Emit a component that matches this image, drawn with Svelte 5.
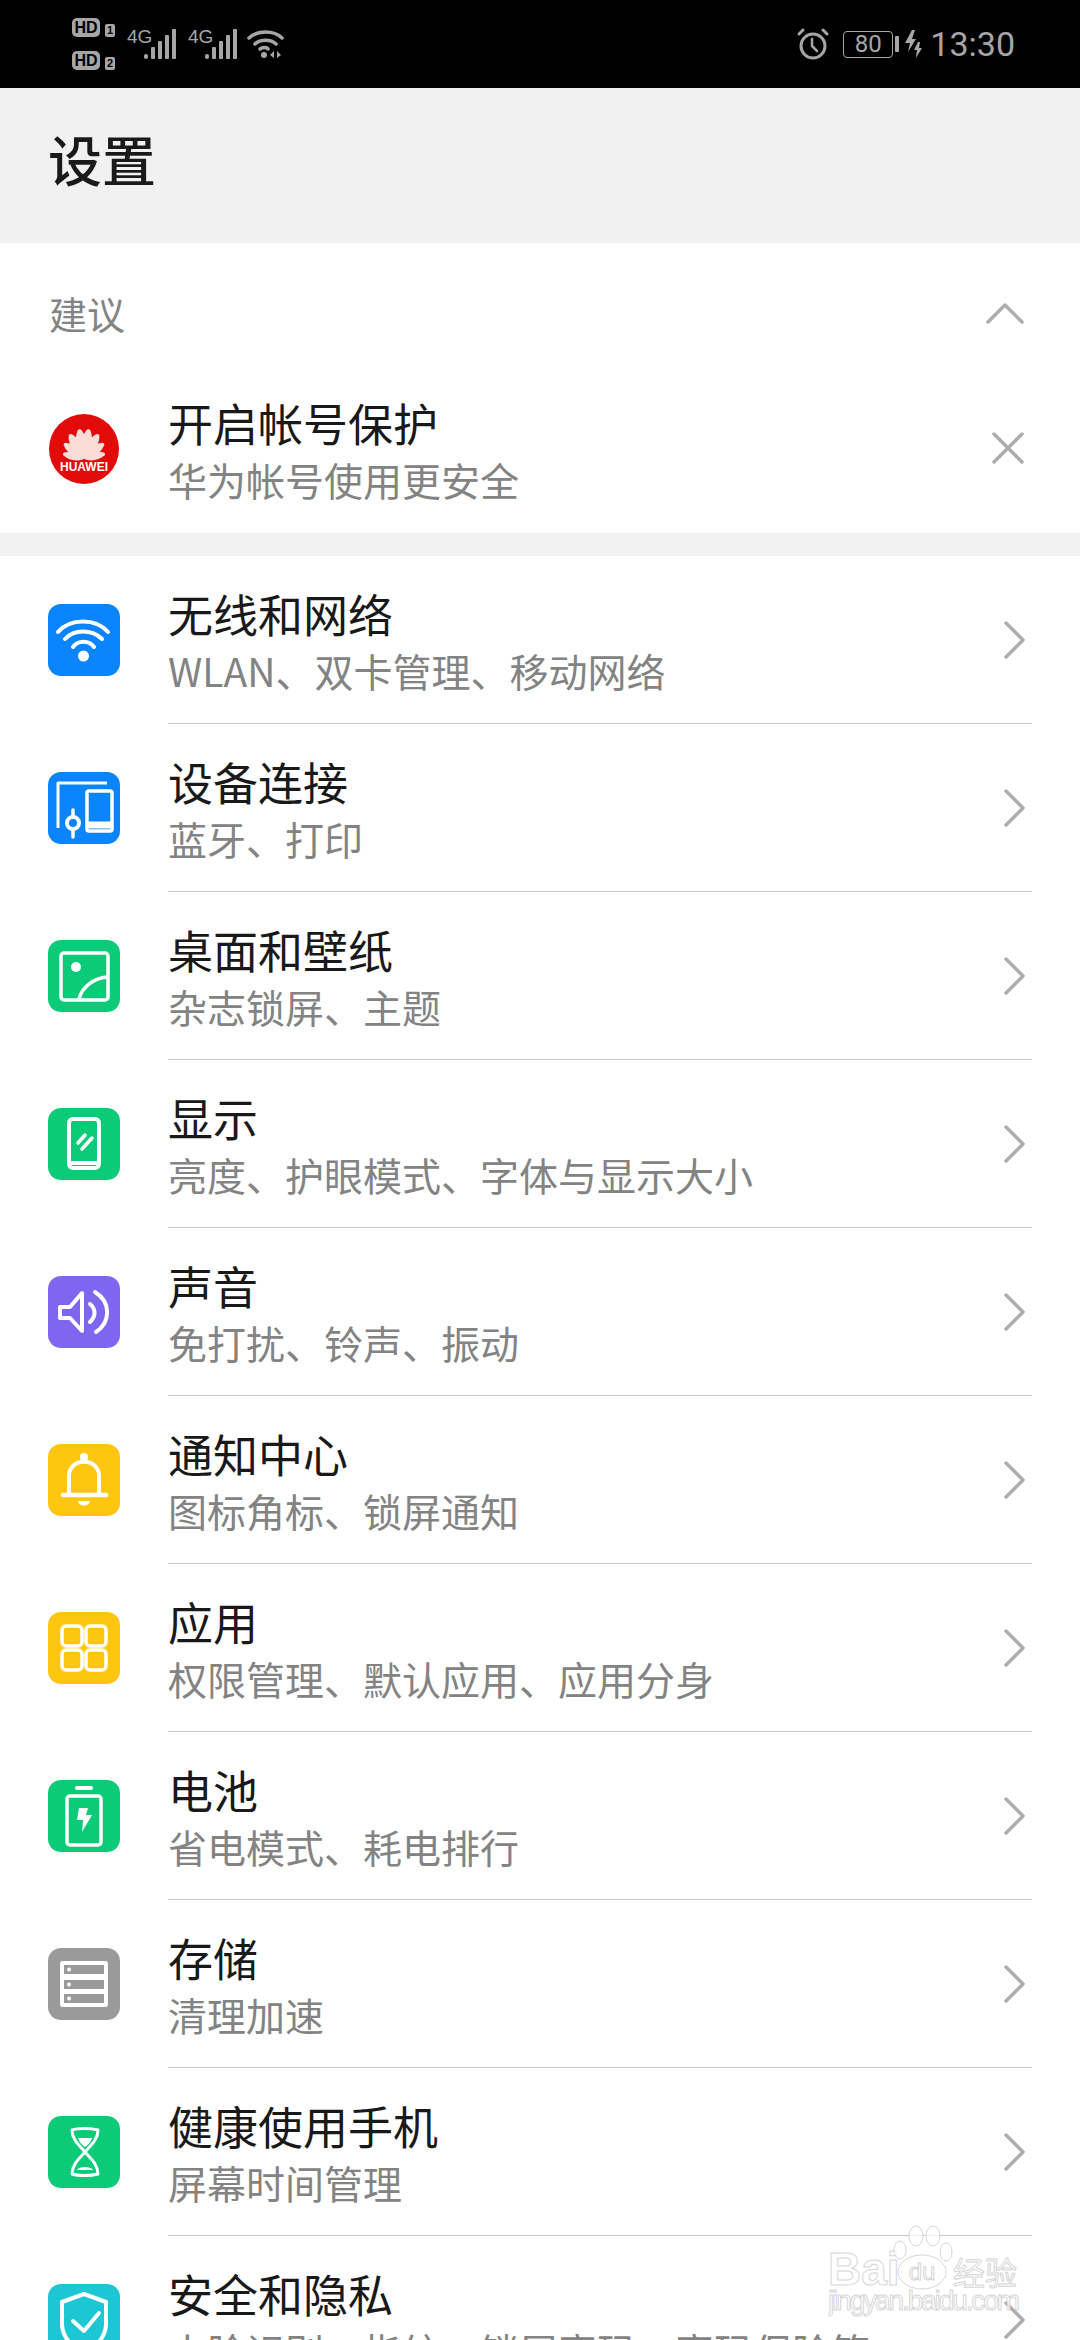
<script>
  const rows = [
    { icon: 'wifi', color: '#0a84ff', title: '无线和网络', sub: 'WLAN、双卡管理、移动网络' },
    { icon: 'devices', color: '#0a84ff', title: '设备连接', sub: '蓝牙、打印' },
    { icon: 'wallpaper', color: '#0ccb78', title: '桌面和壁纸', sub: '杂志锁屏、主题' },
    { icon: 'display', color: '#0ccb78', title: '显示', sub: '亮度、护眼模式、字体与显示大小' },
    { icon: 'sound', color: '#7f66f0', title: '声音', sub: '免打扰、铃声、振动' },
    { icon: 'bell', color: '#ffc60f', title: '通知中心', sub: '图标角标、锁屏通知' },
    { icon: 'apps', color: '#ffc60f', title: '应用', sub: '权限管理、默认应用、应用分身' },
    { icon: 'battery', color: '#0ccb78', title: '电池', sub: '省电模式、耗电排行' },
    { icon: 'storage', color: '#9a9a9a', title: '存储', sub: '清理加速' },
    { icon: 'hourglass', color: '#0ccb78', title: '健康使用手机', sub: '屏幕时间管理' },
    { icon: 'shield', color: '#1cc6d2', title: '安全和隐私', sub: '人脸识别、指纹、锁屏密码、密码保险箱' }
  ];

  // logo fan: angle from vertical, and how long the petal is
  const petals = [
    { a: -76, s: 0.72 },
    { a: -52, s: 0.84 },
    { a: -30, s: 0.95 },
    { a: -9, s: 1 },
    { a: 9, s: 1 },
    { a: 30, s: 0.95 },
    { a: 52, s: 0.84 },
    { a: 76, s: 0.72 }
  ];
</script>

<div class="phone">
  <div class="status">
    <div class="status-left">
      <div class="hd-stack">
        <div class="hd-line"><span class="hd">HD</span><span class="sim">1</span></div>
        <div class="hd-line"><span class="hd">HD</span><span class="sim">2</span></div>
      </div>
      {#each [1, 2] as sim (sim)}
        <div class="signal">
          <span class="net">4G</span>
          <svg width="32" height="30" viewBox="0 0 32 30" fill="#a6a6a6">
            <rect x="0" y="25" width="4" height="5" rx="2" />
            <rect x="7" y="18" width="4" height="12" rx="1" />
            <rect x="14" y="12" width="4" height="18" rx="1" />
            <rect x="21" y="6" width="4" height="24" rx="1" />
            <rect x="28" y="0" width="4" height="30" rx="1" />
          </svg>
        </div>
      {/each}
      <svg class="status-wifi" width="37" height="30" viewBox="0 0 37 30" fill="none" stroke="#a6a6a6" stroke-width="3.5" stroke-linecap="round">
        <path d="M2 9 C10 1 27 1 35 9" />
        <path d="M8 15 C13 10 24 10 29 15" />
        <path d="M13 20 C15 18 20 18 21 20" />
        <circle cx="17" cy="26" r="3" fill="#a6a6a6" stroke="none" />
        <path d="M27 22 L23 26 L27 29 Z M30 22 L34 26 L30 29 Z" fill="#a6a6a6" stroke="none" />
      </svg>
    </div>
    <div class="status-right">
      <svg width="32" height="32" viewBox="0 0 32 32" fill="none" stroke="#a6a6a6" stroke-width="3" stroke-linecap="round">
        <circle cx="16" cy="18" r="12" />
        <path d="M15 11 V18 L20 23" stroke-width="2.5" />
        <path d="M2 6 L6 2 M30 6 L26 2" />
      </svg>
      <div class="battery"><span>80</span></div>
      <span class="nub"></span>
      <svg class="charge" width="17" height="28" viewBox="0 0 17 28" fill="#a6a6a6">
        <path d="M7 0 L0 13 H5 L3 22 L11 9 H7 L10 0 Z" />
        <path d="M13 12 L9 20 H12 L11 28 L17 18 H14 L15 12 Z" />
      </svg>
      <span class="time">13:30</span>
    </div>
  </div>

  <header class="title-bar"><h1>设置</h1></header>

  <section class="suggest">
    <div class="suggest-head">
      <span>建议</span>
      <svg width="38" height="22" viewBox="0 0 38 22" fill="none" stroke="#adadad" stroke-width="3.5" stroke-linecap="round" stroke-linejoin="round">
        <path d="M2 20 L19 3 L36 20" />
      </svg>
    </div>
    <div class="row">
      <svg class="icon" width="72" height="72" viewBox="0 0 72 72">
        <circle cx="36" cy="36" r="35" fill="#e30a0a" />
        {#each petals as p (p.a)}
          <path d="M36 46 C30 38 28.500 26 34 17 C35 15.500 37 15.500 38 17 C43 26 42 38 36 46 Z" fill="#fbdcd6" transform="rotate({p.a} 36 46) translate(36 46) scale({p.s}) translate(-36 -46)" />
        {/each}
        <text x="36" y="58" text-anchor="middle" class="logo-text">HUAWEI</text>
      </svg>
      <div class="body no-line">
        <div class="text">
          <div class="name">开启帐号保护</div>
          <div class="desc">华为帐号使用更安全</div>
        </div>
        <svg class="close" width="34" height="34" viewBox="0 0 34 34" fill="none" stroke="#adadad" stroke-width="3.5" stroke-linecap="round">
          <path d="M3 3 L31 31 M31 3 L3 31" />
        </svg>
      </div>
    </div>
  </section>

  <div class="spacer"></div>

  <section class="list">
    {#each rows as row (row.icon)}
      <div class="row">
        <svg class="icon" width="72" height="72" viewBox="0 0 72 72" fill="none" stroke="#fff" stroke-width="3.5" stroke-linecap="round" stroke-linejoin="round">
          <rect width="72" height="72" rx="13" fill={row.color} stroke="none" />
          {#if row.icon === 'wifi'}
            <path d="M10 28 C22 14 48 14 60 28" stroke-width="4" />
            <path d="M17 35 C26 25 44 25 54 35" stroke-width="4" />
            <path d="M25 43 C30 36 41 36 46 43" stroke-width="4" />
            <circle cx="35.500" cy="52" r="5.500" fill="#fff" stroke="none" />
          {:else if row.icon === 'devices'}
            <path d="M10 56 V11 H59" stroke-width="3" stroke-linecap="butt" />
            <rect x="39" y="19" width="25" height="40" rx="2" stroke-width="3.500" />
            <path d="M39 53 H64" stroke-width="7" stroke-linecap="butt" />
            <circle cx="25" cy="51" r="6" stroke-width="4" fill={row.color} />
            <path d="M25 38 V44 M25 58 V65" stroke-width="3.500" />
          {:else if row.icon === 'wallpaper'}
            <rect x="13" y="13" width="47" height="47" rx="3" />
            <circle cx="28" cy="27" r="5" fill="#fff" stroke="none" />
            <path d="M31 59 C34 47 46 38 59 37" stroke-linecap="butt" />
          {:else if row.icon === 'display'}
            <rect x="21" y="11" width="30" height="49" rx="4" stroke-width="4" />
            <path d="M21 55 H51" stroke-width="4" stroke-linecap="butt" />
            <path d="M30 35 L37 27 M34 41 L44 30" stroke-width="3.500" />
          {:else if row.icon === 'sound'}
            <path d="M12 31 H22 L34 17 V55 L22 42 H12 Z" stroke-width="4" />
            <path d="M42 28 C48 33 48 40 42 46" stroke-width="4" />
            <path d="M47 16 C63 26 63 46 48 56" stroke-width="4" />
          {:else if row.icon === 'bell'}
            <path d="M21 51 V32 C21 13 51 13 51 32 V51" stroke-width="4" />
            <path d="M15 51 H58" stroke-width="4.500" />
            <circle cx="36" cy="13" r="4" fill="#fff" stroke="none" />
            <path d="M30 57 H42 C41 63 31 63 30 57 Z" fill="#fff" stroke="none" />
          {:else if row.icon === 'apps'}
            <rect x="14" y="14" width="20" height="20" rx="4" />
            <rect x="38" y="14" width="20" height="20" rx="4" />
            <rect x="14" y="38" width="20" height="20" rx="4" />
            <rect x="38" y="38" width="20" height="20" rx="4" />
          {:else if row.icon === 'battery'}
            <path d="M29 8 H43" stroke-width="4" />
            <rect x="19" y="16" width="34" height="49" rx="3" />
            <path d="M31 28 H40 L38 35 H44 L34 52 L35 40 H29 Z" fill="#fff" stroke="none" />
          {:else if row.icon === 'storage'}
            <rect x="12" y="13" width="48" height="46" rx="3" fill="#fff" stroke="none" />
            {#each [17, 32, 46] as y (y)}
              <rect x="16" {y} width="40" height="9" fill={row.color} stroke="none" />
              <circle cx="21" cy={y + 4.5} r="2" fill="#fff" stroke="none" />
            {/each}
          {:else if row.icon === 'hourglass'}
            <path d="M24 14 C30 12 43 12 50 14 C50 24 42 30 37 36 C42 42 50 48 50 58 C43 60 30 60 24 58 C24 48 32 42 37 36 C32 30 24 24 24 14 Z" stroke-width="3" />
            <path d="M30 22 H44 C43 26 40 29 37 31 C34 29 31 26 30 22 Z" fill="#fff" stroke="none" />
            <path d="M29 54 C31 50 43 50 45 54 Z" fill="#fff" stroke="none" />
          {:else if row.icon === 'shield'}
            <path d="M36 10 L58 18 V40 C58 54 46 64 36 70 C26 64 14 54 14 40 V18 Z" stroke-width="4" />
            <path d="M25 37 L36 47 L51 29" stroke-width="4" />
          {/if}
        </svg>
        <div class="body">
          <div class="text">
            <div class="name">{row.title}</div>
            <div class="desc">{row.sub}</div>
          </div>
          <svg class="chevron" width="22" height="38" viewBox="0 0 22 38" fill="none" stroke="#adadad" stroke-width="3.5" stroke-linecap="round" stroke-linejoin="round">
            <path d="M3 2 L20 19 L3 36" />
          </svg>
        </div>
      </div>
    {/each}
  </section>

  <svg class="watermark" width="196" height="95" viewBox="0 0 196 95">
    <g fill="#fff" fill-opacity="0.75" stroke="#d6d6d6" stroke-width="1">
      <text x="0" y="60" class="wm-latin">Bai</text>
      <ellipse cx="88" cy="11" rx="7" ry="10" />
      <ellipse cx="105" cy="11" rx="7" ry="10" />
      <ellipse cx="72" cy="25" rx="6" ry="9" />
      <ellipse cx="118" cy="27" rx="6" ry="9" />
      <ellipse cx="94" cy="47" rx="24" ry="17" />
      <text x="94" y="55" text-anchor="middle" class="wm-du">du</text>
      <text x="125" y="60" class="wm-cn">经验</text>
      <text x="0" y="85" textLength="192" class="wm-url">jingyan.baidu.com</text>
    </g>
  </svg>
</div>

<style>
  :global(body) {
    margin: 0;
    background: #fff;
  }

  .phone {
    position: relative;
    width: 1080px;
    height: 2340px;
    overflow: hidden;
    background: #fff;
    font-family: "Noto Sans CJK SC", "Noto Sans", sans-serif;
  }

  .status {
    height: 88px;
    background: #000;
    display: flex;
    justify-content: space-between;
    align-items: center;
    padding: 0 65px 0 72px;
    color: #a6a6a6;
    font-family: Roboto, "Liberation Sans", sans-serif;
  }

  .status-left,
  .status-right {
    display: flex;
    align-items: center;
  }

  .hd-stack {
    display: flex;
    flex-direction: column;
    gap: 14px;
    margin-right: 12px;
  }

  .hd-line {
    display: flex;
    align-items: flex-end;
    gap: 5px;
  }

  .hd {
    width: 28px;
    height: 19px;
    border-radius: 5px;
    background: #a6a6a6;
    color: #000;
    font: bold 16px/19px "Liberation Sans", sans-serif;
    text-align: center;
  }

  .sim {
    width: 10px;
    height: 13px;
    border-radius: 2px;
    background: #a6a6a6;
    color: #000;
    font: bold 11px/13px "Liberation Sans", sans-serif;
    text-align: center;
  }

  .signal {
    display: flex;
    align-items: flex-end;
    margin-right: 12px;
    height: 30px;
  }

  .net {
    width: 17px;
    align-self: flex-start;
    font: 19px/16px "Liberation Sans Narrow", "Liberation Sans", sans-serif;
    white-space: nowrap;
  }

  .status-wifi {
    margin-left: -2px;
  }

  .battery {
    width: 50px;
    height: 27px;
    box-sizing: border-box;
    margin-left: 14px;
    border: 1.5px solid #a6a6a6;
    border-radius: 4px;
    font-size: 24px;
    line-height: 24px;
    text-align: center;
  }

  .nub {
    width: 4px;
    height: 16px;
    margin: 0 6px 0 2px;
    border-radius: 1px;
    background: #a6a6a6;
  }

  .charge {
    margin-right: 8px;
  }

  .time {
    font-size: 34px;
    line-height: 40px;
  }

  .title-bar {
    height: 155px;
    box-sizing: border-box;
    padding: 41px 48px 0;
    background: #f1f1f1;
  }

  h1 {
    margin: 0;
    color: #1a1a1a;
    font-size: 54px;
    line-height: 60px;
    font-weight: 500;
  }

  .suggest-head {
    height: 122px;
    box-sizing: border-box;
    padding: 46px 48px 0 49px;
    display: flex;
    justify-content: space-between;
    color: #848484;
    font-size: 38px;
    line-height: 48px;
  }

  .suggest-head svg {
    margin: 13px 8px 0 0;
  }

  .spacer {
    height: 23px;
    background: #f2f2f2;
  }

  .row {
    display: flex;
    align-items: center;
    height: 168px;
    padding-left: 48px;
  }

  .icon {
    flex: none;
    margin-right: 48px;
  }

  .body {
    flex: 1;
    height: 168px;
    box-sizing: border-box;
    margin-right: 48px;
    border-bottom: 1.5px solid #c8c8c8;
    display: flex;
    justify-content: space-between;
    align-items: center;
  }

  .body.no-line {
    border-bottom: none;
  }

  .text {
    align-self: flex-start;
    padding-top: 28px;
  }

  .name {
    color: #191919;
    font-size: 45px;
    line-height: 60px;
  }

  .desc {
    color: #838383;
    font-size: 39px;
    line-height: 52px;
    white-space: nowrap;
  }

  .chevron {
    margin-right: 7px;
  }

  .close {
    margin-right: 7px;
    margin-top: -2px;
  }

  .logo-text {
    fill: #fff;
    font: bold 12px "Liberation Sans", sans-serif;
  }

  .watermark {
    position: absolute;
    left: 828px;
    top: 2225px;
  }

  .wm-latin {
    font: bold 46px "Liberation Sans", sans-serif;
  }

  .wm-du {
    font: 24px "Liberation Sans", sans-serif;
  }

  .wm-cn {
    font: 32px "Noto Sans CJK SC", sans-serif;
  }

  .wm-url {
    font: 28px "Liberation Sans", sans-serif;
  }
</style>
